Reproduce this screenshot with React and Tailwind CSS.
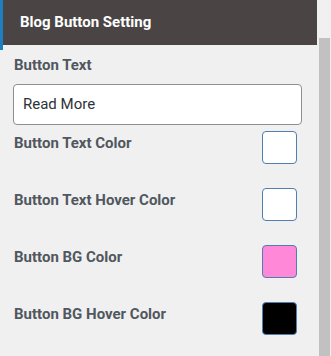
import React from "react";

const rows = [
  { label: "Button Text Color", color: "#ffffff" },
  { label: "Button Text Hover Color", color: "#ffffff" },
  { label: "Button BG Color", color: "#ff88d8" },
  { label: "Button BG Hover Color", color: "#000000" },
];

export default function App() {
  return (
    <div
      className="flex w-[331px] h-[356px] overflow-hidden bg-[#f0f0f0]"
      style={{ fontFamily: "Roboto, 'Liberation Sans', sans-serif" }}
    >
      <div className="w-[317px] flex flex-col">
        <div className="h-[45px] flex items-start">
          <div className="w-[3px] h-[50px] shrink-0 bg-[#1e7fc0]" />
          <div className="h-[45px] flex-1 bg-[#4a4544] flex items-center pl-[17px]">
            <span className="text-white font-bold text-[15px]">Blog Button Setting</span>
          </div>
        </div>
        <div className="pl-[13px] pr-[15px] pt-[10px]">
          <div className="text-[15px] font-bold text-[#50575e] pl-[1px] leading-[20px]">Button Text</div>
          <div className="mt-[9px] h-[41px] rounded-[4px] border border-[#8c8f94] bg-white flex items-center pl-[9px] text-[15px] text-[#2c3338]">
            Read More
          </div>
          <div className="flex flex-col mt-[6px] gap-[24px]">
            {rows.map((r) => (
              <div key={r.label} className="flex justify-between">
                <div className="text-[15px] font-bold text-[#50575e] pl-[1px] pt-[2px] leading-[20px]">{r.label}</div>
                <div
                  className="w-[35px] h-[33px] rounded-[4px] border border-[#4f7fae] mr-[5px]"
                  style={{ backgroundColor: r.color }}
                />
              </div>
            ))}
          </div>
        </div>
      </div>
      <div className="flex-1 flex pt-[38px] pl-[2px] pr-[1px]">
        <div className="w-[11px] bg-[#c1c1c1]" />
      </div>
    </div>
  );
}
